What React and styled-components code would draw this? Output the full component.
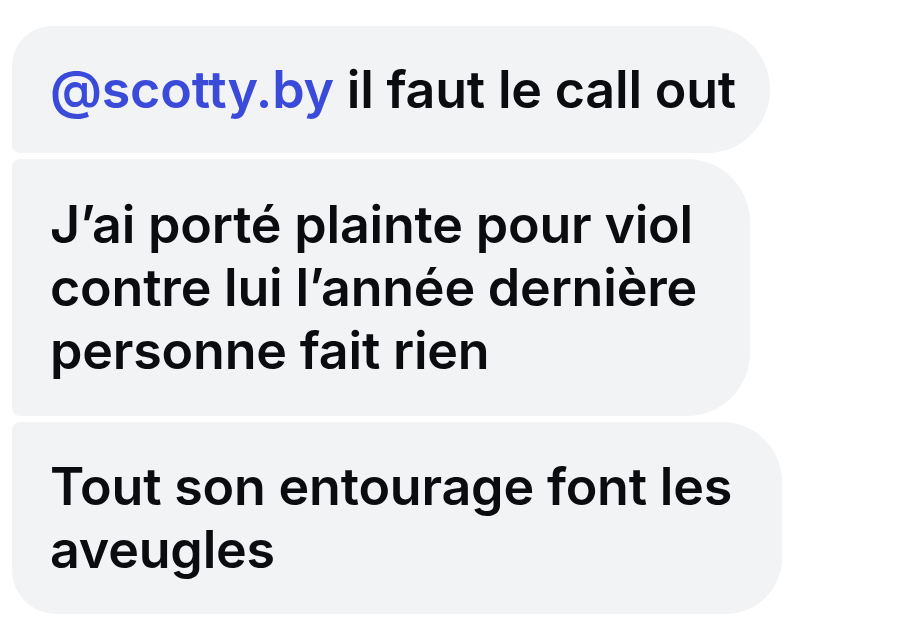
import React from 'react';
import styled, { createGlobalStyle } from 'styled-components';

const Global = createGlobalStyle`
    body {
        margin: 0;
        background: #ffffff;
        font-family: Inter, "Liberation Sans", sans-serif;
    }
`;

const Thread = styled.div`
    display: flex;
    flex-direction: column;
    align-items: flex-start;
    gap: 6px;
    padding: 26px 0 0 12px;
`;

const Bubble = styled.div`
    box-sizing: border-box;
    width: ${p => p.$width}px;
    padding: ${p => p.$padY}px 20px ${p => p.$padY}px 38px;
    background: #f2f3f5;
    color: #0b0c0f;
    font-size: 52px;
    font-weight: 600;
    line-height: 63px;
    letter-spacing: -0.2px;
    border-radius: ${p => p.$radius};
`;

const Mention = styled.span`
    color: #3a4bd9;
`;

export default function App() {
    return (
        <>
            <Global/>
            <Thread>
                <Bubble $width={758} $padY={32} $radius="40px 63px 63px 8px">
                    <Mention>@scotty.by</Mention> il faut le call out
                </Bubble>
                <Bubble $width={738} $padY={34} $radius="8px 63px 63px 8px">
                    J’ai porté plainte pour viol contre lui l’année dernière personne fait rien
                </Bubble>
                <Bubble $width={770} $padY={33} $radius="8px 60px 56px 44px">
                    Tout son entourage font les aveugles
                </Bubble>
            </Thread>
        </>
    );
}
